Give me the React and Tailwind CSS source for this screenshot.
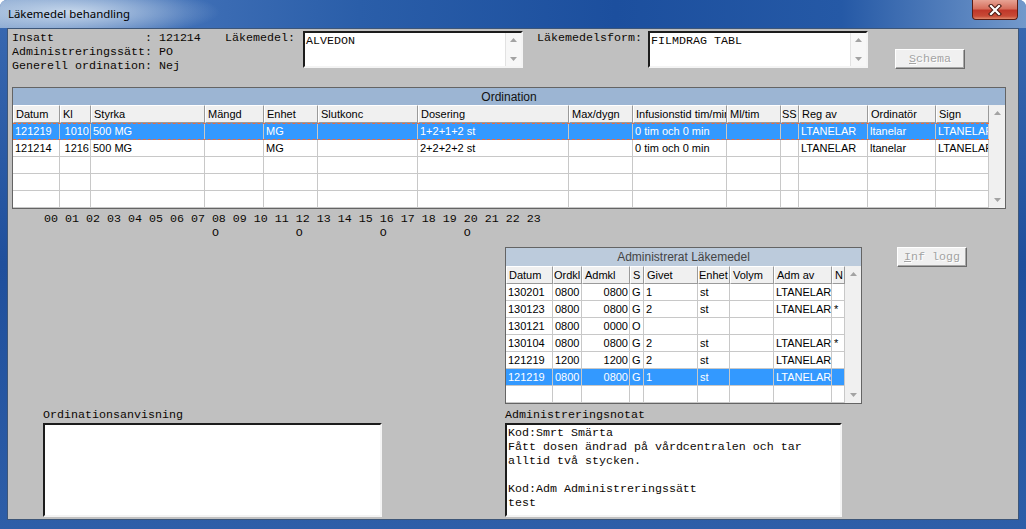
import React from 'react'

const mono = "font-['Liberation_Mono','Courier_New',monospace] text-[11.67px] leading-[14px] text-[#0c0804]"
const sans = "font-['Liberation_Sans',Arial,sans-serif]"

const ordCols = [
  { label: 'Datum', w: 'w-[47px]' },
  { label: 'Kl', w: 'w-[31px]', right: true },
  { label: 'Styrka', w: 'w-[114px]' },
  { label: 'Mängd', w: 'w-[59px]' },
  { label: 'Enhet', w: 'w-[54px]' },
  { label: 'Slutkonc', w: 'w-[100px]' },
  { label: 'Dosering', w: 'w-[151px]' },
  { label: 'Max/dygn', w: 'w-[64px]' },
  { label: 'Infusionstid tim/min', w: 'w-[94px]' },
  { label: 'Ml/tim', w: 'w-[54px]' },
  { label: 'SS', w: 'w-[18px]', tight: true },
  { label: 'Reg av', w: 'w-[69px]' },
  { label: 'Ordinatör', w: 'w-[68px]' },
  { label: 'Sign', w: 'w-[53px]' },
]

const ordRows = [
  ['121219', '1010', '500 MG', '', 'MG', '', '1+2+1+2 st', '', '0 tim och 0 min', '', '', 'LTANELAR', 'ltanelar', 'LTANELAR'],
  ['121214', '1216', '500 MG', '', 'MG', '', '2+2+2+2 st', '', '0 tim och 0 min', '', '', 'LTANELAR', 'ltanelar', 'LTANELAR'],
]

const admCols = [
  { label: 'Datum', w: 'w-[47px]' },
  { label: 'Ordkl', w: 'w-[29px]', tight: true },
  { label: 'Admkl', w: 'w-[48px]', right: true },
  { label: 'S', w: 'w-[14px]' },
  { label: 'Givet', w: 'w-[54px]' },
  { label: 'Enhet', w: 'w-[32px]', tight: true },
  { label: 'Volym', w: 'w-[44px]' },
  { label: 'Adm av', w: 'w-[58px]' },
  { label: 'N', w: 'w-[13px]' },
]

const admRows = [
  ['130201', '0800', '0800', 'G', '1', 'st', '', 'LTANELAR', ''],
  ['130123', '0800', '0800', 'G', '2', 'st', '', 'LTANELAR', '*'],
  ['130121', '0800', '0000', 'O', '', '', '', '', ''],
  ['130104', '0800', '0800', 'G', '2', 'st', '', 'LTANELAR', '*'],
  ['121219', '1200', '1200', 'G', '2', 'st', '', 'LTANELAR', ''],
  ['121219', '0800', '0800', 'G', '1', 'st', '', 'LTANELAR', ''],
]

const hours = Array.from({ length: 24 }, (_, i) => String(i).padStart(2, '0')).join(' ')
const marks = ' '.repeat(24) + 'O' + ' '.repeat(11) + 'O' + ' '.repeat(11) + 'O' + ' '.repeat(11) + 'O'

function Tri({ down }) {
  return (
    <svg width="7" height="4" viewBox="0 0 7 4">
      <path d={down ? 'M0 0 L7 0 L3.5 4 Z' : 'M0 4 L3.5 0 L7 4 Z'} fill="#a3a3a3" />
    </svg>
  )
}

function Scroll({ className }) {
  return (
    <div className={`w-[16px] shrink-0 flex flex-col justify-between items-center ${className}`}>
      <Tri />
      <Tri down />
    </div>
  )
}

function MemoBox({ text, scroll, className }) {
  return (
    <div className={`flex bg-white border-2 border-t-[#1c1c1c] border-l-[#1c1c1c] border-r-[#f4f4f4] border-b-[#f4f4f4] ${className}`}>
      <div className={`flex-1 pl-[1px] pt-[1px] whitespace-pre ${mono}`}>{text}</div>
      {scroll && <Scroll className="bg-[#f7f7f7] border-l border-[#e2e2e2] py-[5px]" />}
    </div>
  )
}

function Btn({ u, rest }) {
  return (
    <div className={`w-[70px] h-[20px] shrink-0 flex items-center justify-center bg-[#f0f0f0] border border-t-white border-l-white border-r-[#6a6a6a] border-b-[#6a6a6a] shadow-[inset_-1px_-1px_0_#a8a8a8] ${mono} text-[#a3a3a3] [text-shadow:1px_1px_0_#ffffff]`}>
      <span className="underline">{u}</span>
      {rest}
    </div>
  )
}

function Grid({ title, band, cols, rows, empty, selected, dashed, className }) {
  const all = [...rows, ...Array(empty).fill(null)]
  return (
    <div className={`flex flex-col bg-white border border-[#646464] ${sans} ${className}`}>
      <div className={`flex items-center justify-center text-[12px] ${band}`}>{title}</div>
      <div className="flex">
        <div className="flex flex-col text-[11px] text-black">
          <div className="flex h-[18px]">
            {cols.map(c => (
              <div
                key={c.label}
                className={`${c.w} shrink-0 h-full flex items-center overflow-hidden whitespace-nowrap bg-[#f0f0f0] border-l border-l-white border-t border-t-white border-r border-r-[#9a9a9a] border-b border-b-[#9a9a9a] ${c.tight ? 'pl-0' : 'pl-[2px]'}`}
              >
                {c.label}
              </div>
            ))}
          </div>
          {all.map((r, i) => {
            const sel = i === selected
            let rowCls = 'border-b border-[#c8c8c8]'
            if (sel) rowCls = dashed ? 'bg-[#3399ff] text-white border-y border-dashed border-[#ee6a3a]' : 'bg-[#3399ff] text-white border-b border-[#c8c8c8]'
            return (
              <div key={i} className={`flex h-[17px] ${rowCls}`}>
                {cols.map((c, j) => (
                  <div
                    key={j}
                    className={`${c.w} shrink-0 h-full flex items-center overflow-hidden whitespace-nowrap border-r border-[#c8c8c8] ${c.right ? 'justify-end pr-[1px]' : 'pl-[2px]'}`}
                  >
                    {r ? r[j] : ''}
                  </div>
                ))}
              </div>
            )
          })}
        </div>
        <Scroll className="bg-[#f0f0f0] py-[6px]" />
      </div>
    </div>
  )
}

export default function App() {
  return (
    <div className="w-[1026px] h-[529px] overflow-hidden flex flex-col rounded-t-[7px] bg-[linear-gradient(180deg,#3a6ab2_0%,#1f4f9c_50%,#2d5ea8_100%)]">
      {/* title bar */}
      <div className="h-[28px] shrink-0 flex items-start bg-[radial-gradient(ellipse_150px_26px_at_70px_12px,rgba(215,228,242,0.85),rgba(215,228,242,0)),linear-gradient(90deg,#7fa0cc_0%,#3f6fb6_18%,#2a5ea9_35%,#1c4f9e_60%,#2559a6_82%,#7399cb_100%)]">
        <div className="pl-[8px] pt-[6px] text-[11.4px] leading-[16px] text-black font-['Noto_Sans',sans-serif]">Läkemedel behandling</div>
        <div className="ml-auto mr-[8px] w-[46px] h-[20px] rounded-b-[4px] border border-t-0 border-[#5a1d14] flex items-center justify-center bg-[linear-gradient(180deg,#e7a394_0%,#d66f5d_45%,#c0382a_55%,#c84a36_85%,#df8a6c_100%)]">
          <svg width="14" height="12" viewBox="0 0 14 12">
            <path d="M3 2 L11 10 M11 2 L3 10" stroke="#4a1a12" strokeWidth="4.2" strokeLinecap="square" />
            <path d="M3 2 L11 10 M11 2 L3 10" stroke="#ffffff" strokeWidth="2.2" strokeLinecap="square" />
          </svg>
        </div>
      </div>

      {/* client area */}
      <div className="mx-[7px] h-[492px] shrink-0 border border-[#3d5678] bg-[#c0c0c0] flex flex-col pl-[4px] pt-[2px]">
        <div className="flex items-start h-[38px]">
          <div className={`w-[213px] shrink-0 whitespace-pre ${mono}`}>
            {'Insatt             : 121214\nAdministreringssätt: PO\nGenerell ordination: Nej'}
          </div>
          <div className={`w-[78px] shrink-0 ${mono}`}>Läkemedel:</div>
          <MemoBox text="ALVEDON" scroll className="w-[220px] h-[37px] shrink-0" />
          <div className={`ml-[14px] w-[111px] shrink-0 ${mono}`}>Läkemedelsform:</div>
          <MemoBox text="FILMDRAG TABL" scroll className="w-[220px] h-[37px] shrink-0" />
          <div className="ml-[27px] mt-[18px]">
            <Btn u="S" rest="chema" />
          </div>
        </div>

        <Grid
          title="Ordination"
          band="h-[17px] bg-[#9cb5d3] text-[#111111]"
          cols={ordCols}
          rows={ordRows}
          empty={3}
          selected={0}
          dashed
          className="mt-[18px] w-[994px]"
        />

        <div className={`mt-[3px] ml-[32px] whitespace-pre ${mono}`}>
          {hours + '\n' + marks}
        </div>

        <div className="mt-[7px] flex items-start">
          <Grid
            title="Administrerat Läkemedel"
            band="h-[18px] bg-[#bccbdc] text-[#444444]"
            cols={admCols}
            rows={admRows}
            empty={1}
            selected={5}
            className="ml-[493px] w-[357px]"
          />
          <div className="ml-[35px]">
            <Btn u="I" rest="nf logg" />
          </div>
        </div>

        <div className="mt-[4px] flex items-start">
          <div className="ml-[31px] w-[339px] shrink-0 flex flex-col">
            <div className={mono}>Ordinationsanvisning</div>
            <MemoBox text="" className="mt-[1px] h-[94px]" />
          </div>
          <div className="ml-[123px] w-[337px] shrink-0 flex flex-col">
            <div className={mono}>Administreringsnotat</div>
            <MemoBox
              text={'Kod:Smrt Smärta\nFått dosen ändrad på vårdcentralen och tar\nalltid två stycken.\n\nKod:Adm Administreringssätt\ntest'}
              className="mt-[1px] h-[94px]"
            />
          </div>
        </div>
      </div>
    </div>
  )
}
